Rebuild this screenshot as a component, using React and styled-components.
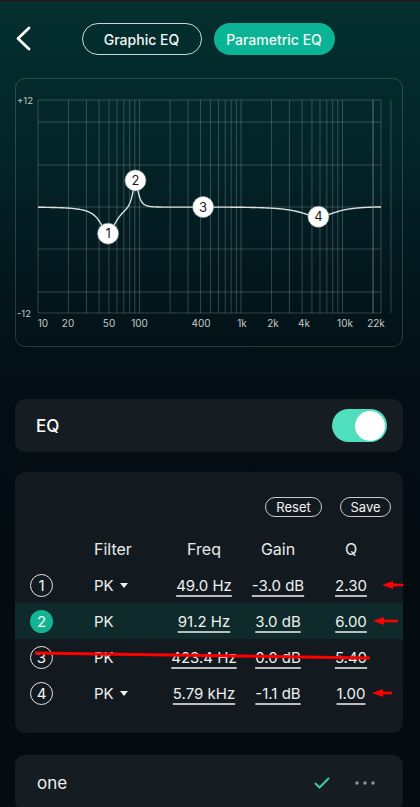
import React from 'react';
import styled, { createGlobalStyle } from 'styled-components';

const GlobalStyle = createGlobalStyle`
  body {
    margin: 0;
    background: #050b10;
    font-family: Inter, "Noto Sans", sans-serif;
    color: #fff;
  }
`

const Page = styled.div`
  width: 420px;
  min-height: 807px;
  box-sizing: border-box;
  border-top: 2px solid #1b1d1e;
  padding: 0 17px 0 15px;
  background: linear-gradient(180deg, #04302f 0%, #032428 150px, #03151b 300px, #030d13 400px, #050b10 100%);
  overflow: hidden;
`

const TopBar = styled.div`
  height: 74px;
  display: grid;
  grid-template-columns: 1fr auto 1fr;
  align-items: center;
  margin-bottom: 2px;
`

const BackButton = styled.div`
  width: 20px;
  height: 26px;
  margin-left: 1px;
  display: flex;
  align-items: center;
`

const Tabs = styled.div`
  display: flex;
  gap: 12px;
  margin-left: -2px;
`

const Tab = styled.div`
  height: 32px;
  width: ${p => p.w}px;
  box-sizing: border-box;
  border-radius: 16px;
  display: flex;
  align-items: center;
  justify-content: center;
  font-size: 14px;
  font-weight: 500;
  color: #f4f6f6;
  border: ${p => p.active ? 'none' : '1.5px solid #cfd6d6'};
  background: ${p => p.active ? '#0bb494' : 'transparent'};
`

const ChartCard = styled.div`
  height: 269px;
  box-sizing: border-box;
  border: 1px solid rgba(255, 255, 255, 0.16);
  border-radius: 10px;
  overflow: hidden;
`

const Card = styled.div`
  background: #151c22;
  border-radius: 10px;
  margin-top: ${p => p.mt}px;
  position: relative;
`

const EqRow = styled.div`
  height: 53px;
  display: flex;
  align-items: center;
  justify-content: space-between;
  padding: 0 16px 0 21px;
  font-size: 17px;
  font-weight: 500;
`

const Toggle = styled.div`
  width: 55px;
  height: 33px;
  border-radius: 17px;
  background: #4fdfbf;
  display: flex;
  align-items: center;
  justify-content: flex-end;
  padding-right: 2px;
  box-sizing: border-box;
`

const Knob = styled.div`
  width: 30px;
  height: 30px;
  border-radius: 50%;
  background: #fff;
`

const TableCard = styled(Card)`
  background: #121a20;
  padding: 25px 0 22px;
`

const Actions = styled.div`
  display: flex;
  justify-content: flex-end;
  gap: 18px;
  padding-right: 12px;
  margin-bottom: 14px;
`

const SmallButton = styled.div`
  height: 20px;
  width: ${p => p.w}px;
  box-sizing: border-box;
  border: 1px solid #c9cdd0;
  border-radius: 10px;
  display: flex;
  align-items: center;
  justify-content: center;
  font-size: 13px;
  color: #f2f2f2;
`

const Row = styled.div`
  height: 36px;
  display: grid;
  grid-template-columns: 64px 68px 84px 64px 82px;
  align-items: center;
  padding-left: 15px;
  font-size: 15px;
  color: #eef0f0;
  background: ${p => p.active ? '#0e2a2a' : 'transparent'};
`

const HeadCell = styled.div`
  font-size: 16px;
  color: #e8eaea;
  text-align: ${p => p.left ? 'left' : 'center'};
`

const Index = styled.div`
  width: 23px;
  height: 23px;
  box-sizing: border-box;
  border-radius: 50%;
  border: ${p => p.active ? 'none' : '1.5px solid #e6e6e6'};
  background: ${p => p.active ? '#12b494' : 'transparent'};
  display: flex;
  align-items: center;
  justify-content: center;
  font-size: 15px;
  color: #f4f4f4;
`

const FilterCell = styled.div`
  display: flex;
  align-items: center;
  gap: 6px;
`

const Caret = styled.span`
  width: 0;
  height: 0;
  border-left: 4px solid transparent;
  border-right: 4px solid transparent;
  border-top: 5px solid #f0f0f0;
  margin-top: 1px;
`

const Value = styled.div`
  text-align: center;
  text-decoration: underline;
  text-decoration-color: #b9bdbf;
  text-underline-offset: 4px;
  text-decoration-thickness: 1.5px;
`

const Annotations = styled.svg`
  position: absolute;
  left: 0;
  top: 0;
  pointer-events: none;
`

const PresetRow = styled.div`
  height: 56px;
  display: flex;
  align-items: center;
  padding: 0 28px 0 22px;
  font-size: 17px;
  color: #eef0f0;
`

const PresetName = styled.div`
  flex: 1;
`

const PresetIcons = styled.div`
  display: flex;
  align-items: center;
  gap: 25px;
`

const bands = [
  { f: 49.0, g: -3.0, q: 2.3 },
  { f: 91.2, g: 3.0, q: 6.0 },
  { f: 423.4, g: 0.0, q: 5.4 },
  { f: 5790, g: -1.1, q: 1.0 },
]

const FS = 48000
const fx = f => 22 + 101.5 * Math.log10(f / 10)
const gy = g => 128 - g * 8.875

function bandDb(b, f) {
  const A = Math.pow(10, b.g / 40)
  const w0 = 2 * Math.PI * b.f / FS
  const alpha = Math.sin(w0) / (2 * b.q)
  const c = Math.cos(w0)
  const nb = [1 + alpha * A, -2 * c, 1 - alpha * A]
  const na = [1 + alpha / A, -2 * c, 1 - alpha / A]
  const w = 2 * Math.PI * f / FS
  const mag = k => {
    const re = k[0] + k[1] * Math.cos(w) + k[2] * Math.cos(2 * w)
    const im = -(k[1] * Math.sin(w) + k[2] * Math.sin(2 * w))
    return Math.sqrt(re * re + im * im)
  }
  return 20 * Math.log10(mag(nb) / mag(na))
}

function curvePath() {
  let d = ''
  for (let x = 22; x <= 365; x += 1) {
    const f = 10 * Math.pow(10, (x - 22) / 101.5)
    const db = bands.reduce((s, b) => s + bandDb(b, f), 0)
    d += (x === 22 ? 'M' : 'L') + x + ' ' + gy(db).toFixed(2) + ' '
  }
  return d
}

const gridFreqs = []
for (let dec = 10; dec <= 10000; dec *= 10) {
  for (let m = 1; m <= 9; m++) gridFreqs.push(dec * m)
}
gridFreqs.push(20000)

const hLines = [21, 43, 86, 128, 170, 213, 234]

const labels = [
  ['10', 27], ['20', 52], ['50', 93], ['100', 123.5], ['400', 185],
  ['1k', 226], ['2k', 257], ['4k', 288], ['10k', 329], ['22k', 360],
]

const EqChart = () => (
  <svg width="386" height="267" viewBox="0 0 386 267">
    <g stroke="rgba(200,205,205,0.26)" strokeWidth="1" fill="none">
      {gridFreqs.map(f => (
        <line key={f} x1={fx(f)} x2={fx(f)} y1="21" y2="234" />
      ))}
      <line x1="365" x2="365" y1="21" y2="234" />
      {hLines.map(y => (
        <line key={y} x1="22" x2="365" y1={y} y2={y} />
      ))}
    </g>
    <g fill="#c4c9c9" fontSize="9.5" fontFamily="Inter, sans-serif">
      <text x="1" y="25">+12</text>
      <text x="1" y="238">-12</text>
      {labels.map(([t, x]) => (
        <text key={t} x={x} y="248" textAnchor="middle" fontSize="10">{t}</text>
      ))}
    </g>
    <path d={curvePath()} stroke="#dcdede" strokeWidth="1.4" fill="none" />
    {bands.map((b, i) => (
      <g key={i}>
        <circle cx={fx(b.f)} cy={gy(b.g)} r="10.5" fill="#fff" stroke="#9aa0a0" strokeWidth="0.6" />
        <text x={fx(b.f)} y={gy(b.g) + 4.5} textAnchor="middle" fontSize="13" fill="#1a1a1a" fontFamily="Inter, sans-serif">{i + 1}</text>
      </g>
    ))}
  </svg>
)

const rows = [
  { n: 1, freq: '49.0 Hz', gain: '-3.0 dB', q: '2.30', caret: true },
  { n: 2, freq: '91.2 Hz', gain: '3.0 dB', q: '6.00', active: true },
  { n: 3, freq: '423.4 Hz', gain: '0.0 dB', q: '5.40' },
  { n: 4, freq: '5.79 kHz', gain: '-1.1 dB', q: '1.00', caret: true },
]

const Arrow = ({ x1, x2, y }) => (
  <g fill="#f00" stroke="none">
    <polygon points={`${x1},${y} ${x1 + 11},${y - 4} ${x1 + 11},${y + 4}`} />
    <rect x={x1 + 9} y={y - 1.3} width={x2 - x1 - 9} height="2.6" />
  </g>
)

const App = () => {
  return (
    <>
      <GlobalStyle />
      <Page>
        <TopBar>
          <BackButton>
            <svg width="16" height="26" viewBox="0 0 16 26">
              <polyline points="13,2 2,12.5 13,23" fill="none" stroke="#fff" strokeWidth="2.8" strokeLinecap="round" strokeLinejoin="round" />
            </svg>
          </BackButton>
          <Tabs>
            <Tab w={120}>Graphic EQ</Tab>
            <Tab w={121} active>Parametric EQ</Tab>
          </Tabs>
          <div />
        </TopBar>

        <ChartCard>
          <EqChart />
        </ChartCard>

        <Card mt={52}>
          <EqRow>
            <span>EQ</span>
            <Toggle><Knob /></Toggle>
          </EqRow>
        </Card>

        <TableCard mt={20}>
          <Actions>
            <SmallButton w={57}>Reset</SmallButton>
            <SmallButton w={51}>Save</SmallButton>
          </Actions>
          <Row>
            <div />
            <HeadCell left>Filter</HeadCell>
            <HeadCell>Freq</HeadCell>
            <HeadCell>Gain</HeadCell>
            <HeadCell>Q</HeadCell>
          </Row>
          {rows.map(r => (
            <Row key={r.n} active={r.active}>
              <Index active={r.active}>{r.n}</Index>
              <FilterCell>PK{r.caret && <Caret />}</FilterCell>
              <Value>{r.freq}</Value>
              <Value>{r.gain}</Value>
              <Value>{r.q}</Value>
            </Row>
          ))}
          <Annotations width="388" height="261" viewBox="0 0 388 261">
            <Arrow x1={367} x2={390} y={113} />
            <Arrow x1={358} x2={383} y={149} />
            <Arrow x1={357} x2={377} y={221} />
            <line x1="20" y1="181" x2="355" y2="186" stroke="#f00" strokeWidth="3" />
          </Annotations>
        </TableCard>

        <Card mt={22}>
          <PresetRow>
            <PresetName>one</PresetName>
            <PresetIcons>
              <svg width="16" height="12" viewBox="0 0 16 12">
                <polyline points="1.5,6.5 5.5,10.5 14.5,1.5" fill="none" stroke="#3fcaa9" strokeWidth="2" strokeLinecap="round" strokeLinejoin="round" />
              </svg>
              <svg width="20" height="4" viewBox="0 0 20 4">
                <circle cx="2" cy="2" r="1.8" fill="#8b9196" />
                <circle cx="10" cy="2" r="1.8" fill="#8b9196" />
                <circle cx="18" cy="2" r="1.8" fill="#8b9196" />
              </svg>
            </PresetIcons>
          </PresetRow>
        </Card>
      </Page>
    </>
  )
}

export default App;
